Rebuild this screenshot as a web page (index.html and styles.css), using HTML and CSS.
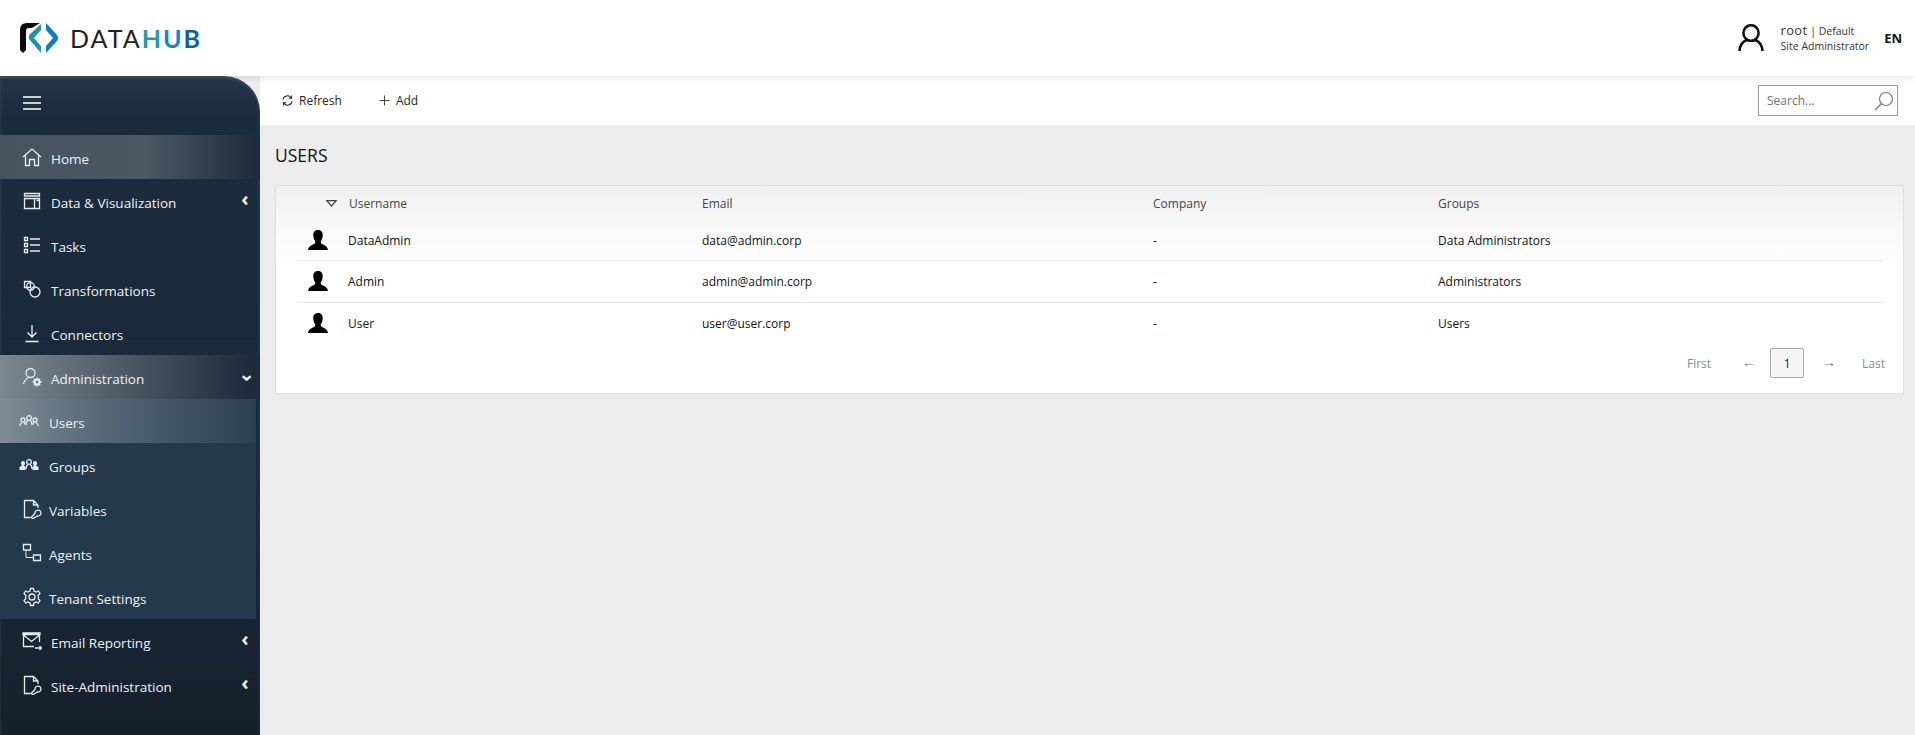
FILE: index.html
```html
<!DOCTYPE html>
<html lang="en">
<head>
<meta charset="utf-8">
<title>DataHub - Users</title>
<link rel="stylesheet" href="styles.css">
</head>
<body>
<header class="topbar">
  <div class="logo">
    <svg class="logo-mark" viewBox="0 0 38 30" width="38" height="30">
      <path d="M7 0H20L12 5H9Q6 5 6 8V27L3 30 0 27V7Q0 0 7 0Z" fill="#0b0b0b"/>
      <path d="M21 1V7L14 15 21 23V30L9 16V12Z" fill="#1b97a8"/>
      <path d="M26 0 37 12Q39 15 37 18L26 30V23L33 15 26 7Z" fill="#0f7fc0"/>
    </svg>
    <span class="logo-text">DATA<span class="h">H</span><span class="u">U</span><span class="b">B</span></span>
  </div>
  <div class="account">
    <svg class="account-icon" viewBox="0 0 26 28" width="26" height="28" fill="none" stroke="#111" stroke-width="2.6">
      <ellipse cx="13" cy="9" rx="7.6" ry="7.8"/>
      <path d="M1.500 27C2 20 6 17 9 16M24.500 27C24 20 20 17 17 16"/>
    </svg>
    <div class="account-text">
      <div class="account-name"><span class="root">root</span> | Default</div>
      <div class="account-role">Site Administrator</div>
    </div>
    <span class="lang">EN</span>
  </div>
</header>

<div class="body-row">
  <nav class="sidebar">
    <div class="burger"><span></span><span></span><span></span></div>
    <a class="nav-item home">
      <svg class="ico" viewBox="0 0 20 20"><path d="M1 10 10 2l9 8M3.500 8.500V18.500H7.500V12.500H12.500V18.500H16.500V8.500"/></svg>
      Home
    </a>
    <a class="nav-item">
      <svg class="ico" viewBox="0 0 20 20"><path d="M2.500 2.500H17.500V5H2.500ZM2.500 7.500H17.500V17.500H2.500ZM12.500 7.500V17.500M14.500 9.500H17.500"/></svg>
      Data &amp; Visualization
      <span class="chev">‹</span>
    </a>
    <a class="nav-item">
      <svg class="ico" viewBox="0 0 20 20"><path d="M2.500 2.500H5.500V5.500H2.500ZM2.500 8.500H5.500V11.500H2.500ZM2.500 14.500H5.500V17.500H2.500ZM8 4H18M8 10H18M8 16H18"/></svg>
      Tasks
    </a>
    <a class="nav-item">
      <svg class="ico" viewBox="0 0 20 20"><path d="M2.500 2.500H8.500V8.500H2.500Z"/><circle cx="8.500" cy="7.500" r="3.800"/><circle cx="13" cy="13" r="5"/></svg>
      Transformations
    </a>
    <a class="nav-item">
      <svg class="ico" viewBox="0 0 20 20"><path d="M10 2V14M5.500 9.500 10 14l4.500-4.500M3.500 18.500H16.500"/></svg>
      Connectors
    </a>
    <a class="nav-item admin">
      <svg class="ico" viewBox="0 0 20 20"><circle cx="8.500" cy="6" r="4.500"/><path d="M1.500 17C2 14 4 12 6 11"/><circle class="gear" cx="15" cy="15" r="2.500"/><path d="M15 10.500V12.500M15 17.500V19.500M10.500 15H12.500M17.500 15H19.500M11.800 11.800 13.500 13.500M16.500 16.500 18.200 18.200M18.200 11.800 16.500 13.500M13.500 16.500 11.800 18.200"/></svg>
      Administration
      <span class="chev down">‹</span>
    </a>
    <div class="subnav">
      <a class="sub-item active">
        <svg class="ico-wide" viewBox="0 0 20 14"><circle cx="4" cy="6" r="2"/><circle cx="10" cy="4" r="2.300"/><circle cx="16" cy="6" r="2"/><path d="M.7 12C1 10 2 9 3 8.500M7 11C7 8.500 8 7 9 6.500M11 6.500C12 7 13 8.500 13 11M17 8.500C18 9 19 10 19.300 12M5 8.500 6.300 10.500M15 8.500 13.700 10.500"/></svg>
        Users
      </a>
      <a class="sub-item">
        <svg class="ico-wide" viewBox="0 0 20 14"><circle cx="10" cy="4" r="2.300"/><path d="M7 11C7 8.500 8 7 9 6.500M11 6.500C12 7 13 8.500 13 11"/><path class="solid" d="M4 3a2 2 0 0 1 2 2c0 1-.5 2-1 2.500L6.500 9v3H.5V9L3 7.500C2.500 7 2 6 2 5a2 2 0 0 1 2-2ZM16 3a2 2 0 0 1 2 2c0 1-.5 2-1 2.500L19.500 9v3h-6V9L15 7.500C14.500 7 14 6 14 5a2 2 0 0 1 2-2Z"/></svg>
        Groups
      </a>
      <a class="sub-item">
        <svg class="ico tall" viewBox="0 0 20 20"><path d="M8 18.500H2.500V1.500H11.500L16 6V9M11.500 1.500V6H16"/><path d="M9 18.500 13 14.500A3 3 0 1 1 15.500 17L11 19.500Z"/></svg>
        Variables
      </a>
      <a class="sub-item">
        <svg class="ico tall" viewBox="0 0 20 20"><path d="M1.500 1.500H8.500V7H1.500ZM11.500 12H18.500V17.500H11.500Z"/><path class="thin" d="M4 7V14.500H11.500"/></svg>
        Agents
      </a>
      <a class="sub-item">
        <svg class="ico tall" viewBox="0 0 20 20"><circle cx="10" cy="10" r="3"/><path d="M8.500 1.500H11.500L12 4 14 5 16.300 4 18 6.500 16.300 8.300V11.700L18 13.500 16.300 16 14 15 12 16 11.500 18.500H8.500L8 16 6 15 3.700 16 2 13.500 3.700 11.700V8.300L2 6.500 3.700 4 6 5 8 4Z"/></svg>
        Tenant Settings
      </a>
    </div>
    <a class="nav-item">
      <svg class="ico" viewBox="0 0 20 20"><path d="M1 3.500H18V2H1ZM1.500 4V15.500H12M17.500 4V11M1.500 4 9.500 10.500 17.500 4M13 17H19.500M17.500 15 19.500 17 17.500 19"/></svg>
      Email Reporting
      <span class="chev">‹</span>
    </a>
    <a class="nav-item">
      <svg class="ico" viewBox="0 0 20 20"><path d="M8 18.500H2.500V1.500H11.500L16 6V9M11.500 1.500V6H16"/><path d="M9 18.500 13 14.500A3 3 0 1 1 15.500 17L11 19.500Z"/></svg>
      Site-Administration
      <span class="chev">‹</span>
    </a>
  </nav>

  <main class="main">
    <div class="toolbar">
      <button class="tool">
        <svg class="tool-ico" viewBox="0 0 12 12"><path d="M1 5A5 5 0 0 1 10 3M11 7A5 5 0 0 1 2 9M10.500 .5V3.500H7.500M1.500 11.500V8.500H4.500"/></svg>
        Refresh
      </button>
      <button class="tool">
        <svg class="tool-ico plus" viewBox="0 0 12 12"><path d="M6 .5V11.500M.5 6H11.500"/></svg>
        Add
      </button>
      <div class="search">
        <span class="search-ph">Search...</span>
        <svg class="search-ico" viewBox="0 0 20 20"><circle cx="12" cy="8" r="6.500"/><path d="M7.500 12.500 1 19"/></svg>
      </div>
    </div>
    <section class="content">
      <h1 class="page-title">USERS</h1>
      <div class="card">
        <table class="grid">
          <colgroup><col class="c-ico"><col class="c-user"><col class="c-mail"><col class="c-comp"><col></colgroup>
          <thead>
            <tr>
              <th class="sort"><svg class="tri" viewBox="0 0 11 7"><path d="M.8.7H10.200L5.500 6Z"/></svg></th>
              <th class="th-user">Username</th>
              <th>Email</th>
              <th>Company</th>
              <th>Groups</th>
            </tr>
          </thead>
          <tbody>
            <tr>
              <td class="avatar"><svg viewBox="0 0 20 20" width="20" height="20"><path d="M10 0C13.500 0 15 2.500 14.700 6 14.400 9 13.300 10.500 12.700 11.500 12.500 13.500 14 14 16 15S19.500 17 20 20H0C.5 17 2 16 4 15S7.500 13.500 7.300 11.500C6.700 10.500 5.600 9 5.300 6 5 2.500 6.500 0 10 0Z"/></svg></td>
              <td>DataAdmin</td><td>data@admin.corp</td><td>-</td><td>Data Administrators</td>
            </tr>
            <tr>
              <td class="avatar"><svg viewBox="0 0 20 20" width="20" height="20"><path d="M10 0C13.500 0 15 2.500 14.700 6 14.400 9 13.300 10.500 12.700 11.500 12.500 13.500 14 14 16 15S19.500 17 20 20H0C.5 17 2 16 4 15S7.500 13.500 7.300 11.500C6.700 10.500 5.600 9 5.300 6 5 2.500 6.500 0 10 0Z"/></svg></td>
              <td>Admin</td><td>admin@admin.corp</td><td>-</td><td>Administrators</td>
            </tr>
            <tr>
              <td class="avatar"><svg viewBox="0 0 20 20" width="20" height="20"><path d="M10 0C13.500 0 15 2.500 14.700 6 14.400 9 13.300 10.500 12.700 11.500 12.500 13.500 14 14 16 15S19.500 17 20 20H0C.5 17 2 16 4 15S7.500 13.500 7.300 11.500C6.700 10.500 5.600 9 5.300 6 5 2.500 6.500 0 10 0Z"/></svg></td>
              <td>User</td><td>user@user.corp</td><td>-</td><td>Users</td>
            </tr>
          </tbody>
        </table>
        <div class="pager">
          <span class="pg first">First</span>
          <span class="pg arrow">←</span>
          <span class="pg-current">1</span>
          <span class="pg arrow">→</span>
          <span class="pg last">Last</span>
        </div>
      </div>
    </section>
  </main>
</div>
</body>
</html>
```

FILE: styles.css
```css
* { box-sizing: border-box; }

html, body {
  margin: 0;
  height: 100%;
  overflow: hidden;
}

body {
  display: flex;
  flex-direction: column;
  font-family: "Open Sans", "Noto Sans", "Liberation Sans", sans-serif;
  font-size: 12px;
  color: #1c1c1c;
  background: #ececec;
}

/* Top bar */
.topbar {
  position: relative;
  z-index: 1;
  flex: 0 0 76px;
  display: flex;
  align-items: center;
  justify-content: space-between;
  padding: 0 13px 0 20px;
  background: #fff;
  box-shadow: 0 2px 7px rgba(0, 0, 0, .1);
}

.logo {
  display: flex;
  align-items: center;
  gap: 12px;
  margin-top: -1px;
}

.logo-mark { display: block; }

.logo-text {
  font-family: "Lato", sans-serif;
  font-size: 25px;
  line-height: 30px;
  letter-spacing: 2px;
  color: #222;
}

.logo-text .h { color: #1f9cab; font-weight: 700; }
.logo-text .u { color: #0f88c8; font-weight: 700; }
.logo-text .b { color: #0d62a6; font-weight: 700; }

.account {
  display: flex;
  align-items: center;
}

.account-icon { margin-right: 17px; }

.account-text {
  margin-right: 15px;
  font-size: 10.500px;
  line-height: 15px;
  color: #333;
}

.account-name .root { font-size: 13px; letter-spacing: .3px; }

.lang {
  font-size: 13px;
  font-weight: 700;
  color: #111;
}

/* Layout */
.body-row {
  flex: 1;
  display: flex;
  min-height: 0;
}

/* Sidebar */
.sidebar {
  position: relative;
  z-index: 2;
  flex: 0 0 260px;
  border-top-right-radius: 36px;
  background: linear-gradient(180deg, #23364a 0, #1c2c3c 40px, #1b2a3a 50%, #16212d 100%);
  box-shadow: inset 0 2px 3px rgba(255, 255, 255, .12);
  color: #eef1f3;
  font-size: 13.500px;
  font-weight: 500;
}

.burger {
  height: 59px;
  display: flex;
  flex-direction: column;
  justify-content: center;
  gap: 4px;
  padding: 0 0 5px 23px;
}

.burger span {
  display: block;
  width: 18px;
  height: 2px;
  background: #c8cdd1;
}

.nav-item, .sub-item {
  display: flex;
  align-items: center;
  height: 44px;
  padding-top: 3px;
}

.nav-item { padding-left: 22px; }

.nav-item.home {
  background: linear-gradient(90deg, #46545f 0, #4c5965 55%, #1c2a39 100%);
}

.nav-item.admin {
  background: linear-gradient(90deg, #7d8790 0, #4a5763 50%, #1c2a39 97%);
}

.ico, .ico-wide {
  flex: none;
  fill: none;
  stroke: #e8ecef;
  stroke-width: 1.300;
  margin-top: -3px;
}

.ico {
  width: 20px;
  height: 20px;
  margin-right: 9px;
}

.ico-wide {
  width: 20px;
  height: 14px;
  margin-right: 10px;
}

.ico-wide .solid { fill: #e8ecef; stroke: none; }
.thin { stroke-width: 1; }
.gear { stroke-width: 2; }

.chev {
  margin-left: auto;
  margin-right: 10px;
  width: 10px;
  text-align: center;
  font-size: 20px;
  line-height: 20px;
  font-weight: 700;
  margin-top: -8px;
}

.chev.down {
  transform: rotate(-90deg);
  margin-top: -1px;
}

.subnav {
  width: 256px;
  background: #25394c;
}

.sub-item { padding-left: 19px; }

.subnav .ico.tall { margin-left: 3px; margin-right: 7px; }

.sub-item.active {
  background: linear-gradient(90deg, #7e8b95 0, #566876 40%, #2b4053 100%);
}

/* Toolbar */
.main {
  flex: 1;
  min-width: 0;
  display: flex;
  flex-direction: column;
}

.toolbar {
  flex: 0 0 49px;
  display: flex;
  align-items: center;
  padding: 0 17px 0 22px;
  background: #fff;
}

.tool {
  display: flex;
  align-items: center;
  gap: 6px;
  margin-right: 37px;
  padding: 0;
  border: 0;
  background: none;
  font: inherit;
  color: #222;
}

.tool-ico {
  width: 11px;
  height: 11px;
  fill: none;
  stroke: #222;
  stroke-width: 1.100;
}

.tool-ico.plus { stroke: #444; }

.search {
  width: 140px;
  height: 31px;
  margin-left: auto;
  display: flex;
  align-items: center;
  justify-content: space-between;
  padding: 0 3px 0 8px;
  border: 1px solid #9a9a9a;
  background: #fff;
  color: #6f6f6f;
}

.search-ico {
  width: 20px;
  height: 20px;
  fill: none;
  stroke: #777;
  stroke-width: 1.200;
}

/* Content */
.content {
  flex: 1;
  padding: 0 11px 0 15px;
  background: #ececec;
}

.page-title {
  margin: 0;
  height: 60px;
  padding-top: 18px;
  font-size: 17.500px;
  line-height: 25px;
  font-weight: 400;
  color: #111;
}

.card {
  padding: 0 20px 0 21px;
  border: 1px solid #dedede;
  background: linear-gradient(180deg, #f0f0f0 0, #ffffff 78px);
  height: 209px;
}

.grid {
  width: 100%;
  table-layout: fixed;
  border-collapse: collapse;
}

.c-ico { width: 51px; }
.c-user { width: 354px; }
.c-mail { width: 451px; }
.c-comp { width: 285px; }

.grid th {
  height: 34px;
  padding: 0;
  text-align: left;
  font-weight: 400;
  color: #444;
}

.th-user { padding-left: 1px !important; }

.sort { position: relative; }

.tri {
  position: absolute;
  left: 29px;
  top: 14px;
  width: 11px;
  height: 7px;
  fill: none;
  stroke: #444;
  stroke-width: 1.300;
}

.grid td {
  padding: 0;
  height: 42px;
  border-bottom: 1px solid #e8e8e8;
  color: #111;
}

.grid tbody tr:first-child td { height: 40px; padding-top: 1px; }
.grid tbody tr:last-child td { border-bottom: 0; }

.avatar svg {
  display: block;
  margin-left: 11px;
  fill: #000;
}

.pager {
  display: flex;
  align-items: center;
  justify-content: flex-end;
  margin: 4px -2px 0 0;
  color: #8b8b8b;
  font-size: 12px;
}

.pg.arrow {
  margin: 0 18px;
  width: 10px;
  text-align: center;
  font-size: 14px;
  line-height: 16px;
  margin-top: -2px;
  color: #777;
}

.pg.first { margin-right: 13px; }
.pg.last { margin-left: 12px; }

.pg-current {
  width: 34px;
  height: 30px;
  display: flex;
  align-items: center;
  justify-content: center;
  border: 1px solid #aaa;
  border-radius: 2px;
  background: #f5f5f5;
  color: #222;
}
```
